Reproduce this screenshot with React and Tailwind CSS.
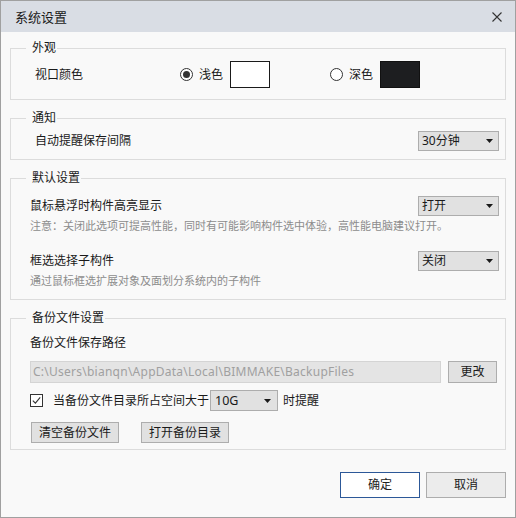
import React from "react";

const Arrow = () => (
  <svg width="7" height="4" viewBox="0 0 7 4" className="shrink-0">
    <polygon points="0,0 7,0 3.5,4" fill="#1a1a1a" />
  </svg>
);

function Select({ value, w }) {
  return (
    <div className={`${w} h-[20px] border border-[#adadad] bg-[#e1e1e1] flex items-center justify-between pl-[3px] pr-[5px] leading-[18px]`}>
      <span>{value}</span>
      <Arrow />
    </div>
  );
}

function Group({ title, children, className = "" }) {
  return (
    <fieldset className={`mx-[9px] border border-[#dcdcdc] ${className}`}>
      <legend className="ml-[15px] pl-[6px] pr-[1px] leading-[18px] text-[12px]">{title}</legend>
      {children}
    </fieldset>
  );
}

function Radio({ checked }) {
  return (
    <span className="w-[13px] h-[13px] rounded-full border border-[#333] bg-white flex items-center justify-center shrink-0">
      {checked && <span className="w-[7px] h-[7px] rounded-full bg-[#333]" />}
    </span>
  );
}

export default function App() {
  return (
    <div className="w-[516px] h-[518px] border border-[#a0a0a0] bg-[#f9f9f9] flex flex-col text-[12px] text-[#1a1a1a] font-['Noto_Sans','Noto_Sans_CJK_SC',sans-serif]">
      <div className="h-[31px] shrink-0 bg-[#d9dde4] flex items-center justify-between pl-[14px] pr-[13px]">
        <span className="text-[13px] leading-[18px]">系统设置</span>
        <svg width="10" height="10" viewBox="0 0 10 10">
          <path d="M0.5 0.5 L9.5 9.5 M9.5 0.5 L0.5 9.5" stroke="#333" strokeWidth="1.1" fill="none" />
        </svg>
      </div>

      <Group title="外观" className="mt-[7px]">
        <div className="pl-[24px] pt-[4px] pb-[11px]">
          <div className="flex items-center h-[27px]">
            <span className="w-[145px] leading-[18px]">视口颜色</span>
            <div className="w-[150px] flex items-center">
              <Radio checked />
              <span className="ml-[6px] leading-[18px]">浅色</span>
              <span className="ml-[7px] w-[40px] h-[27px] border border-[#1a1a1a] bg-white" />
            </div>
            <div className="flex items-center">
              <Radio />
              <span className="ml-[6px] leading-[18px]">深色</span>
              <span className="ml-[7px] w-[40px] h-[27px] border border-[#111] bg-[#1d1e20]" />
            </div>
          </div>
        </div>
      </Group>

      <Group title="通知" className="mt-[9px]">
        <div className="pl-[24px] pr-[6px] pt-[4px] pb-[8px]">
          <div className="flex items-center justify-between h-[20px]">
            <span className="leading-[18px]">自动提醒保存间隔</span>
            <Select value="30分钟" w="w-[81px]" />
          </div>
        </div>
      </Group>

      <Group title="默认设置" className="mt-[9px]">
        <div className="pl-[19px] pr-[6px] pt-[9px] pb-[10px]">
          <div className="flex items-center justify-between h-[20px]">
            <span className="leading-[18px]">鼠标悬浮时构件高亮显示</span>
            <Select value="打开" w="w-[81px]" />
          </div>
          <div className="mt-[2px] leading-[16px] text-[11px] text-[#8c8c8c]">
            注意：关闭此选项可提高性能，同时有可能影响构件选中体验，高性能电脑建议打开。
          </div>
          <div className="mt-[17px] flex items-center justify-between h-[20px]">
            <span className="leading-[18px]">框选选择子构件</span>
            <Select value="关闭" w="w-[81px]" />
          </div>
          <div className="mt-[2px] leading-[16px] text-[11px] text-[#8c8c8c]">
            通过鼠标框选扩展对象及面划分系统内的子构件
          </div>
        </div>
      </Group>

      <Group title="备份文件设置" className="mt-[9px]">
        <div className="pl-[19px] pr-[8px] pt-[7px] pb-[6px]">
          <div className="leading-[18px]">备份文件保存路径</div>
          <div className="mt-[9px] flex items-center gap-[7px]">
            <div className="flex-1 h-[22px] border border-[#d4d4d4] bg-[#e4e4e4] pl-[2px] flex items-center text-[12px] tracking-[0.25px] text-[#a0a0a0] leading-[18px] overflow-hidden whitespace-nowrap">
              C:\Users\bianqn\AppData\Local\BIMMAKE\BackupFiles
            </div>
            <div className="w-[49px] h-[22px] border border-[#adadad] bg-[#e1e1e1] flex items-center justify-center leading-[18px]">
              更改
            </div>
          </div>
          <div className="mt-[7px] flex items-center h-[21px]">
            <span className="w-[13px] h-[13px] border border-[#333] bg-white flex items-center justify-center shrink-0">
              <svg width="9" height="9" viewBox="0 0 9 9">
                <path d="M0.8 4.6 L3.4 7.2 L8.2 1.4" stroke="#333" strokeWidth="1.1" fill="none" />
              </svg>
            </span>
            <span className="ml-[10px] leading-[18px]">当备份文件目录所占空间大于</span>
            <div className="ml-[1px] w-[68px] h-[21px] border border-[#adadad] bg-[#e1e1e1] flex items-center justify-between pl-[4px] pr-[6px] leading-[18px]">
              <span className="text-[12.5px]">10G</span>
              <Arrow />
            </div>
            <span className="ml-[5px] leading-[18px]">时提醒</span>
          </div>
          <div className="mt-[11px] ml-[1px] flex items-center gap-[22px]">
            <div className="w-[88px] h-[21px] border border-[#adadad] bg-[#e1e1e1] flex items-center justify-center leading-[18px]">
              清空备份文件
            </div>
            <div className="w-[88px] h-[21px] border border-[#adadad] bg-[#e1e1e1] flex items-center justify-center leading-[18px]">
              打开备份目录
            </div>
          </div>
        </div>
      </Group>

      <div className="mt-[22px] flex justify-end gap-[6px] pr-[9px]">
        <div className="w-[80px] h-[26px] border border-[#2c5898] bg-white flex items-center justify-center leading-[18px] text-[#222]">
          确定
        </div>
        <div className="w-[80px] h-[26px] border border-[#adadad] bg-[#ececec] flex items-center justify-center leading-[18px] text-[#222]">
          取消
        </div>
      </div>
    </div>
  );
}
